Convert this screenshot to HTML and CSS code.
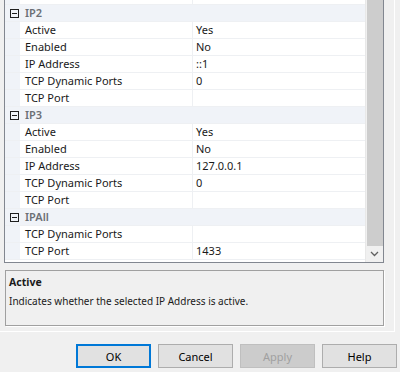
FILE: index.html
```html
<!DOCTYPE html>
<html>
    <head>
        <meta charset="UTF-8">
        <title>Protocol Properties</title>
        <link rel="stylesheet" href="styles.css">
    </head>

    <body>
        <div class="dialog">
            <div class="tab-page">
                <div class="grid">
                    <div class="grid-rows">
                        <div class="row prop">
                            <div class="gutter"></div>
                            <div class="name"></div>
                            <div class="value"></div>
                        </div>

                        <div class="row category">
                            <div class="gutter"><span class="toggle"></span></div>
                            <div class="cat-name">IP2</div>
                        </div>
                        <div class="row prop">
                            <div class="gutter"></div>
                            <div class="name">Active</div>
                            <div class="value">Yes</div>
                        </div>
                        <div class="row prop">
                            <div class="gutter"></div>
                            <div class="name">Enabled</div>
                            <div class="value">No</div>
                        </div>
                        <div class="row prop">
                            <div class="gutter"></div>
                            <div class="name">IP Address</div>
                            <div class="value">::1</div>
                        </div>
                        <div class="row prop">
                            <div class="gutter"></div>
                            <div class="name">TCP Dynamic Ports</div>
                            <div class="value">0</div>
                        </div>
                        <div class="row prop">
                            <div class="gutter"></div>
                            <div class="name">TCP Port</div>
                            <div class="value"></div>
                        </div>

                        <div class="row category">
                            <div class="gutter"><span class="toggle"></span></div>
                            <div class="cat-name">IP3</div>
                        </div>
                        <div class="row prop">
                            <div class="gutter"></div>
                            <div class="name">Active</div>
                            <div class="value">Yes</div>
                        </div>
                        <div class="row prop">
                            <div class="gutter"></div>
                            <div class="name">Enabled</div>
                            <div class="value">No</div>
                        </div>
                        <div class="row prop">
                            <div class="gutter"></div>
                            <div class="name">IP Address</div>
                            <div class="value">127.0.0.1</div>
                        </div>
                        <div class="row prop">
                            <div class="gutter"></div>
                            <div class="name">TCP Dynamic Ports</div>
                            <div class="value">0</div>
                        </div>
                        <div class="row prop">
                            <div class="gutter"></div>
                            <div class="name">TCP Port</div>
                            <div class="value"></div>
                        </div>

                        <div class="row category">
                            <div class="gutter"><span class="toggle"></span></div>
                            <div class="cat-name">IPAll</div>
                        </div>
                        <div class="row prop">
                            <div class="gutter"></div>
                            <div class="name">TCP Dynamic Ports</div>
                            <div class="value"></div>
                        </div>
                        <div class="row prop">
                            <div class="gutter"></div>
                            <div class="name">TCP Port</div>
                            <div class="value">1433</div>
                        </div>
                    </div>

                    <div class="scrollbar">
                        <div class="thumb"></div>
                        <div class="arrow">
                            <svg width="9" height="6" viewBox="0 0 9 6">
                                <path d="M1 1 L4.5 4.5 L8 1" fill="none" stroke="#606060" stroke-width="1.3"/>
                            </svg>
                        </div>
                    </div>
                </div>

                <div class="description">
                    <p class="desc-title">Active</p>
                    <p class="desc-text">Indicates whether the selected IP Address is active.</p>
                </div>
            </div>

            <div class="button-bar">
                <button class="btn default">OK</button>
                <button class="btn">Cancel</button>
                <button class="btn" disabled>Apply</button>
                <button class="btn">Help</button>
            </div>
        </div>
    </body>
</html>
```

FILE: styles.css
```css
body {
    margin: 0;
    background-color: #f0f0f0;
    font-family: "Noto Sans", "Open Sans", sans-serif;
    font-size: 11px;
    color: #1a1a1a;
}

.dialog {
    width: 400px;
    height: 372px;
    overflow: hidden;
}

.tab-page {
    width: 395px;
    height: 332px;
    border-right: 1px solid #ffffff;
    border-bottom: 1px solid #ffffff;
    padding-left: 4px;
    box-sizing: border-box;
}

.grid {
    display: flex;
    width: 380px;
    height: 263px;
    border: 1px solid #828790;
    border-top: none;
    box-sizing: border-box;
    background-color: #ffffff;
    overflow: hidden;
}

.grid-rows {
    flex: 1;
    margin-top: -12px;
}

.row {
    display: flex;
    height: 16px;
    border-bottom: 1px solid #eef0f3;
}

.gutter {
    width: 15px;
    flex-shrink: 0;
    background-color: #f0f3f8;
    display: flex;
    align-items: center;
    justify-content: center;
}

.toggle {
    position: relative;
    width: 7px;
    height: 7px;
    border: 1.5px solid #1e1e1e;
    margin-left: 3px;
}

.toggle::after {
    content: "";
    position: absolute;
    left: 1px;
    right: 1px;
    top: 3px;
    height: 1.5px;
    background-color: #1e1e1e;
}

.name {
    width: 173px;
    flex-shrink: 0;
    padding-left: 5px;
    box-sizing: border-box;
    border-right: 1px solid #eef0f3;
    line-height: 16px;
    white-space: nowrap;
}

.value {
    flex: 1;
    padding-left: 3px;
    line-height: 16px;
}

.category {
    background-color: #f0f3f8;
}

.cat-name {
    padding-left: 5px;
    line-height: 16px;
    font-weight: 600;
    color: #6b6f75;
}

.scrollbar {
    width: 17px;
    display: flex;
    flex-direction: column;
    background-color: #f0f0f0;
    border-left: 1px solid #e8e8e8;
}

.thumb {
    flex: 1;
    margin-left: 1px;
    background-color: #cdcdcd;
}

.arrow {
    height: 16px;
    display: flex;
    align-items: center;
    justify-content: center;
}

.description {
    margin-top: 7px;
    margin-left: 1px;
    width: 379px;
    height: 56px;
    border: 1px solid #a0a0a0;
    box-shadow: 1px 1px 0 #ffffff;
    box-sizing: border-box;
    padding: 2px 3px;
    font-size: 10px;
}

.description p {
    margin: 0;
    line-height: 19px;
}

.desc-title {
    font-weight: 700;
    font-size: 10.5px;
}

.button-bar {
    display: flex;
    column-gap: 7px;
    padding-left: 76px;
    margin-top: 12px;
}

.btn {
    width: 75px;
    height: 24px;
    font-family: "Noto Sans", "Open Sans", sans-serif;
    font-size: 11px;
    color: #000000;
    background-color: #e1e1e1;
    border: 1px solid #adadad;
    padding: 0;
}

.btn.default {
    border: 1px solid #0078d7;
    box-shadow: inset 0 0 0 1px #0078d7;
}

.btn:disabled {
    color: #a0a0a0;
    background-color: #cccccc;
    border-color: #bfbfbf;
}
```
